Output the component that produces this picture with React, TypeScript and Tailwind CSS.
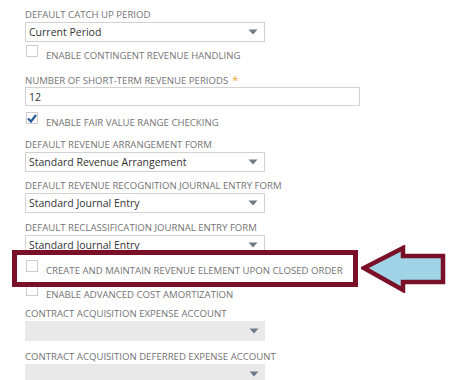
import React from "react";

const Caret = () => (
  <svg width="10" height="6" viewBox="0 0 10 6" className="absolute right-[6px] top-1/2 -translate-y-1/2">
    <path d="M0.5 0.5 H9.5 L5 5.5 Z" fill="#6f7a88" />
  </svg>
);

const Label = ({ text, req }: { text: string; req?: boolean }) => (
  <div className="h-[14px] leading-[14px] text-[9.6px] text-[#747474] whitespace-nowrap">
    {text}
    {req && <span className="text-[#f0a030] ml-[4px] text-[11px]">*</span>}
  </div>
);

const Select = ({ value, disabled }: { value?: string; disabled?: boolean }) => (
  <div
    className={
      "relative w-[240px] h-[20px] leading-[19px] pl-[3px] text-[10.5px] text-[#333] " +
      (disabled ? "bg-[#e9e9e9]" : "bg-white border border-[#d2d2d2]")
    }
  >
    {value}
    <Caret />
  </div>
);

const Check = ({ text, checked }: { text: string; checked?: boolean }) => (
  <div className="flex items-start h-[18px]">
    <div className="w-[12px] h-[12px] border border-[#cdcdcd] bg-white flex items-center justify-center ml-[1px]">
      {checked && (
        <svg width="10" height="9" viewBox="0 0 10 9">
          <path d="M1 4.5 L4 7.5 L9 1" stroke="#2a5a9a" strokeWidth="2.2" fill="none" />
        </svg>
      )}
    </div>
    <div className="ml-[8px] mt-[4px] leading-[14px] text-[9.6px] text-[#747474] whitespace-nowrap">{text}</div>
  </div>
);

export default function App() {
  return (
    <div
      className="relative w-[449px] h-[380px] bg-white overflow-hidden pl-[25px] pt-[8px]"
      style={{ fontFamily: '"Open Sans", sans-serif' }}
    >
      <Label text="DEFAULT CATCH UP PERIOD" />
      <Select value="Current Period" />
      <div className="mt-[3px]">
        <Check text="ENABLE CONTINGENT REVENUE HANDLING" />
      </div>
      <div className="mt-[10px]">
        <Label text="NUMBER OF SHORT-TERM REVENUE PERIODS" req />
      </div>
      <div className="w-[335px] h-[19px] leading-[18px] pl-[3px] text-[10.5px] text-[#333] border border-[#d2d2d2]">12</div>
      <div className="mt-[6px]">
        <Check text="ENABLE FAIR VALUE RANGE CHECKING" checked />
      </div>
      <div className="mt-[8px]">
        <Label text="DEFAULT REVENUE ARRANGEMENT FORM" />
      </div>
      <Select value="Standard Revenue Arrangement" />
      <div className="mt-[7px]">
        <Label text="DEFAULT REVENUE RECOGNITION JOURNAL ENTRY FORM" />
      </div>
      <Select value="Standard Journal Entry" />
      <div className="mt-[8px]">
        <Label text="DEFAULT RECLASSIFICATION JOURNAL ENTRY FORM" />
      </div>
      <Select value="Standard Journal Entry" />
      <div className="mt-[5px]">
        <Check text="CREATE AND MAINTAIN REVENUE ELEMENT UPON CLOSED ORDER" />
      </div>
      <div className="mt-[6px]">
        <Check text="ENABLE ADVANCED COST AMORTIZATION" />
      </div>
      <div className="mt-[5px]">
        <Label text="CONTRACT ACQUISITION EXPENSE ACCOUNT" />
      </div>
      <Select disabled />
      <div className="mt-[9px]">
        <Label text="CONTRACT ACQUISITION DEFERRED EXPENSE ACCOUNT" />
      </div>
      <Select disabled />

      {/* highlight overlay */}
      <div className="absolute left-[12px] top-[250px] w-[346px] h-[37px] border-[5px] border-[#7a1028]" />
      <svg className="absolute left-[361px] top-[245px]" width="86" height="48" viewBox="0 0 86 48">
        <path
          d="M3 23 L42 3 L42 11 L82 11 L82 37 L42 37 L42 45 Z"
          fill="#9fd4e6"
          stroke="#7a1028"
          strokeWidth="4.5"
          strokeLinejoin="miter"
        />
      </svg>
    </div>
  );
}
